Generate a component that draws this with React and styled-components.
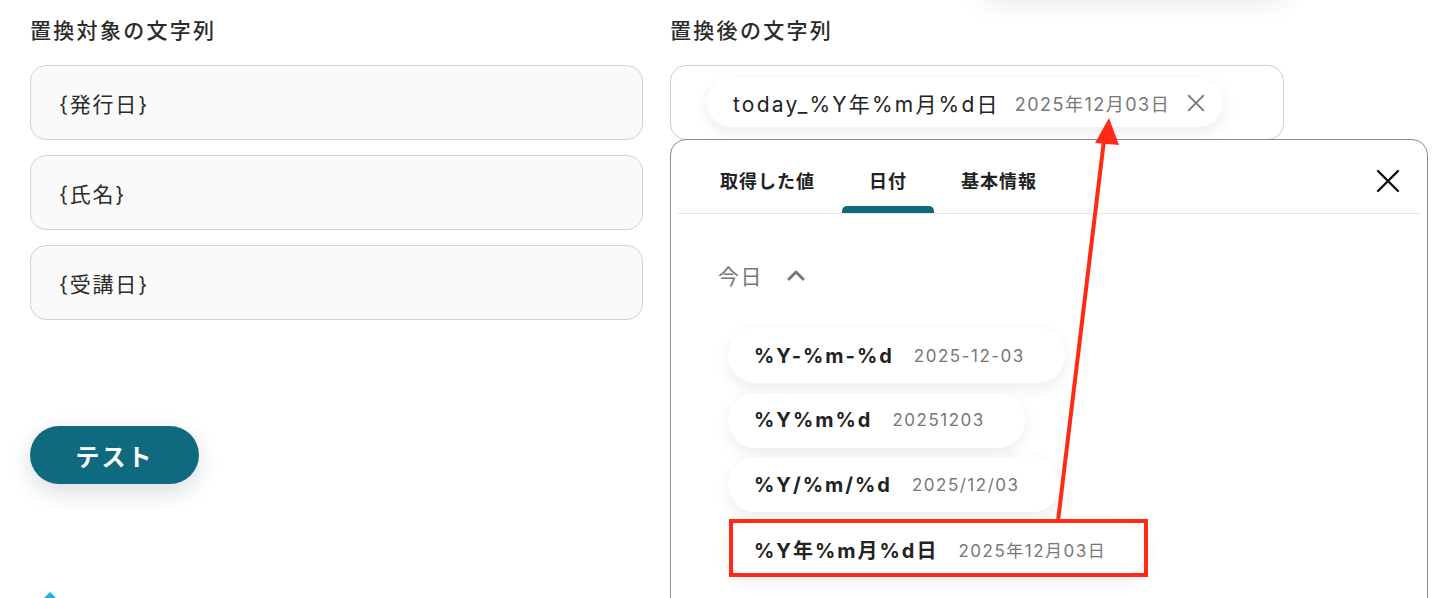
import React from "react";
import styled, { createGlobalStyle } from "styled-components";

const GlobalStyle = createGlobalStyle`
  html, body {
    margin: 0;
    padding: 0;
    background: #ffffff;
    overflow: hidden;
  }
  body {
    font-family: "Inter", "Noto Sans CJK JP", sans-serif;
    color: #222;
  }
`;

const Page = styled.div`
  position: relative;
  width: 1442px;
  height: 598px;
  overflow: hidden;
  display: flex;
  flex-direction: row;
  align-items: flex-start;
  gap: 27px;
  padding: 16px 0 0 30px;
  box-sizing: border-box;
`;

const TopShadow = styled.div`
  position: absolute;
  top: -60px;
  left: 975px;
  width: 315px;
  height: 60px;
  border-radius: 20px;
  box-shadow: 0 6px 24px rgba(0, 0, 0, 0.07);
`;

const Column = styled.div`
  display: flex;
  flex-direction: column;
  flex-shrink: 0;
  width: ${(p) => p.width}px;

  & > * {
    flex-shrink: 0;
  }
`;

const Label = styled.div`
  font-size: 21px;
  font-weight: 500;
  line-height: 30px;
  letter-spacing: 2.3px;
  color: #2b2b2b;
  margin-bottom: 19px;
`;

const FieldList = styled.div`
  display: flex;
  flex-direction: column;
  gap: 15px;
`;

const Field = styled.div`
  display: flex;
  align-items: center;
  height: 75px;
  box-sizing: border-box;
  padding: 0 28px;
  background: #fafafa;
  border: 1.5px solid #d2d2d2;
  border-radius: 16px;
  font-size: 21px;
  color: #2b2b2b;
  letter-spacing: 1.8px;
`;

const TestButton = styled.button`
  margin-top: 106px;
  width: 169px;
  height: 58px;
  border: none;
  border-radius: 29px;
  background: #0f6a80;
  color: #fff;
  font-family: "Inter", "Noto Sans CJK JP", sans-serif;
  font-size: 24px;
  font-weight: 700;
  letter-spacing: 2px;
  box-shadow: 0 8px 22px rgba(20, 40, 60, 0.16);
  cursor: pointer;
`;

const Footer = styled.div`
  margin-top: 108px;
  padding-left: 7px;
  display: flex;
  align-items: center;
`;

const TargetField = styled.div`
  display: flex;
  align-items: center;
  width: 614px;
  height: 75px;
  box-sizing: border-box;
  padding: 0 36px;
  background: #fff;
  border: 1.5px solid #cfcfcf;
  border-radius: 16px;
`;

const Pill = styled.div`
  display: inline-flex;
  align-items: center;
  height: ${(p) => p.h}px;
  box-sizing: border-box;
  padding: ${(p) => p.pad};
  background: #fff;
  border-radius: 28px;
  box-shadow: 0 5px 16px rgba(0, 0, 0, 0.08);
  gap: ${(p) => p.gap}px;
  white-space: nowrap;
`;

const PillKey = styled.span`
  font-size: ${(p) => p.size}px;
  font-weight: ${(p) => (p.bold ? 700 : 400)};
  letter-spacing: ${(p) => p.ls}px;
  color: #222;
`;

const PillValue = styled.span`
  font-size: ${(p) => p.size}px;
  letter-spacing: 1.5px;
  color: #777;
`;

const RemoveButton = styled.span`
  display: flex;
  color: #777;
`;

const Panel = styled.div`
  margin-top: -1px;
  width: 758px;
  height: 520px;
  box-sizing: border-box;
  border: 1.5px solid #8c8c8c;
  border-radius: 16px;
  background: #fff;
  padding: 0 7px;
`;

const TabBar = styled.div`
  display: flex;
  align-items: flex-end;
  justify-content: space-between;
  height: 73px;
  border-bottom: 1.5px solid #e6e6e6;
  padding-left: 15px;
`;

const Tabs = styled.div`
  display: flex;
`;

const Tab = styled.div`
  position: relative;
  box-sizing: border-box;
  padding: 6px 27px 0;
  height: 73px;
  display: flex;
  align-items: center;
  font-size: 18px;
  font-weight: 700;
  letter-spacing: 1px;
  color: #222;

  &::after {
    content: "";
    display: ${(p) => (p.active ? "block" : "none")};
    position: absolute;
    left: 0;
    right: 0;
    bottom: 0;
    height: 7px;
    border-radius: 5px 5px 0 0;
    background: #0f6a80;
  }
`;

const CloseButton = styled.div`
  display: flex;
  align-self: center;
  margin-right: 20px;
  margin-top: 8px;
  color: #111;
`;

const Section = styled.div`
  padding: 46px 0 0 40px;
`;

const SectionHead = styled.div`
  display: flex;
  align-items: center;
  gap: 24px;
  font-size: 21px;
  letter-spacing: 1.5px;
  color: #777;
`;

const OptionList = styled.div`
  display: flex;
  flex-direction: column;
  align-items: flex-start;
  gap: 9.5px;
  margin-top: 38px;
  padding-left: 10px;
`;

const Overlay = styled.svg`
  position: absolute;
  top: 0;
  left: 0;
  pointer-events: none;
`;

const options = [
  { key: "%Y-%m-%d", value: "2025-12-03" },
  { key: "%Y%m%d", value: "20251203" },
  { key: "%Y/%m/%d", value: "2025/12/03" },
  { key: "%Y年%m月%d日", value: "2025年12月03日" },
];

function App() {
  return (
    <>
      <GlobalStyle />
      <Page>
        <TopShadow />
        <Column width={613}>
          <Label>置換対象の文字列</Label>
          <FieldList>
            <Field>{"{発行日}"}</Field>
            <Field>{"{氏名}"}</Field>
            <Field>{"{受講日}"}</Field>
          </FieldList>
          <div>
            <TestButton>テスト</TestButton>
          </div>
          <Footer>
            <svg width="26" height="26" viewBox="0 0 26 26">
              <path d="M13 0 L26 13 L13 26 L0 13 Z" fill="#1ab6e6" />
            </svg>
          </Footer>
        </Column>

        <Column width={758}>
          <Label>置換後の文字列</Label>
          <TargetField>
            <Pill h={49} pad="0 16px 0 26px" gap={15}>
              <PillKey size={21} ls={2.2}>today_%Y年%m月%d日</PillKey>
              <PillValue size={18}>2025年12月03日</PillValue>
              <RemoveButton>
                <svg width="22" height="22" viewBox="0 0 24 24" fill="none" stroke="currentColor" strokeWidth="2" strokeLinecap="round">
                  <path d="M4 4 L20 20 M20 4 L4 20" />
                </svg>
              </RemoveButton>
            </Pill>
          </TargetField>

          <Panel>
            <TabBar>
              <Tabs>
                <Tab>取得した値</Tab>
                <Tab active>日付</Tab>
                <Tab>基本情報</Tab>
              </Tabs>
              <CloseButton>
                <svg width="24" height="24" viewBox="0 0 24 24" fill="none" stroke="currentColor" strokeWidth="2.4" strokeLinecap="round">
                  <path d="M2 2 L22 22 M22 2 L2 22" />
                </svg>
              </CloseButton>
            </TabBar>

            <Section>
              <SectionHead>
                今日
                <svg width="18" height="12" viewBox="0 0 18 12" fill="none" stroke="#777" strokeWidth="3" strokeLinecap="round" strokeLinejoin="round">
                  <path d="M2 10 L9 3 L16 10" />
                </svg>
              </SectionHead>
              <OptionList>
                {options.map((opt) => (
                  <Pill key={opt.key} h={55} pad="0 40px 0 26px" gap={20}>
                    <PillKey size={20} ls={2} bold>
                      {opt.key}
                    </PillKey>
                    <PillValue size={17}>{opt.value}</PillValue>
                  </Pill>
                ))}
              </OptionList>
            </Section>
          </Panel>
        </Column>

        <Overlay width="1442" height="598" viewBox="0 0 1442 598">
          <rect x="731" y="521" width="415" height="54" fill="none" stroke="#ff2a16" strokeWidth="4" />
          <line x1="1058" y1="521" x2="1104" y2="140" stroke="#ff2a16" strokeWidth="4" />
          <path d="M1109 118 L1119 145 L1095 143 Z" fill="#ff2a16" />
        </Overlay>
      </Page>
    </>
  );
}

export default App;
